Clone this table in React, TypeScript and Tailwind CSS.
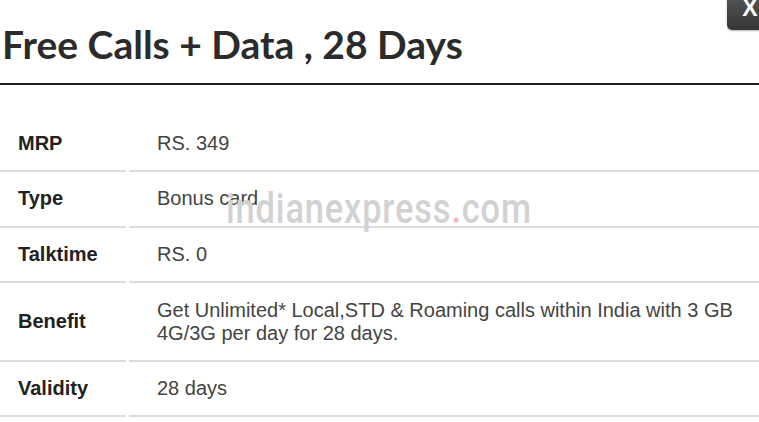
import { ReactNode } from 'react';

type Row = { label: string; value: ReactNode };

const ROWS: Row[] = [
  { label: 'MRP', value: 'RS. 349' },
  { label: 'Type', value: 'Bonus card' },
  { label: 'Talktime', value: 'RS. 0' },
  {
    label: 'Benefit',
    value: 'Get Unlimited* Local,STD & Roaming calls within India with 3 GB 4G/3G per day for 28 days.',
  },
  { label: 'Validity', value: '28 days' },
];

function PlanRow({ row }: { row: Row }) {
  return (
    <div className="flex gap-[3px]">
      <div className="flex w-[126px] shrink-0 items-center border-b-[2px] border-[#dcdcdc] pl-[18px] font-bold text-[#222]">
        {row.label}
      </div>
      <div className="flex flex-1 items-center border-b-[2px] border-[#dcdcdc] py-[15.3px] pl-[28px] pr-[20px] text-[#444]">
        {row.value}
      </div>
    </div>
  );
}

export default function App() {
  return (
    <div className="relative h-[422px] w-[759px] overflow-hidden bg-white">
      <button
        type="button"
        className="absolute right-[-14px] top-[-8px] flex h-[38px] w-[46px] justify-center rounded-[5px] bg-gradient-to-b from-[#5a5a5a] to-[#353535] pt-[5px] text-[23px] font-bold leading-[22px] text-white shadow-[0_1px_2px_rgba(0,0,0,0.3)]"
        style={{ fontFamily: '"Liberation Sans", Arial, sans-serif' }}
      >
        X
      </button>

      <h1
        className="pl-[2px] pt-[21px] text-[39px] font-bold leading-[47px] text-[#2b2b2b]"
        style={{ fontFamily: 'Lato, "Open Sans", sans-serif' }}
      >
        Free Calls + Data , 28 Days
      </h1>
      <div className="mt-[15px] h-[2px] bg-[#1e1e1e]" />

      <div
        className="mt-[31.5px] text-[20px] leading-[23px]"
        style={{ fontFamily: '"Liberation Sans", Arial, sans-serif' }}
      >
        {ROWS.map((row) => (
          <PlanRow key={row.label} row={row} />
        ))}
      </div>

      {/* watermark */}
      <div
        className="pointer-events-none absolute left-[226px] top-[185px] origin-left scale-x-[0.82] text-[42px] font-medium leading-[48px] tracking-[1px] text-[#d2d2d2]"
        style={{ fontFamily: 'Roboto, sans-serif' }}
      >
        indianexpress<span className="text-[#f2b9b9]">.</span>com
      </div>
    </div>
  );
}
